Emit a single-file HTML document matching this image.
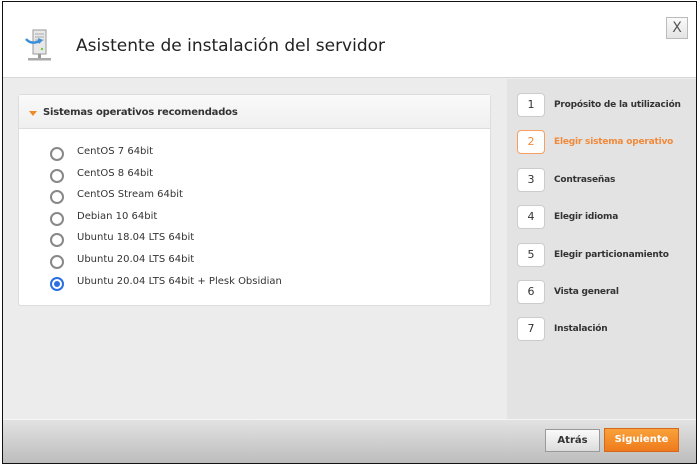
<!DOCTYPE html>
<html><head><meta charset="utf-8"><style>
*{margin:0;padding:0;box-sizing:border-box}
body{width:700px;height:466px;background:#fff;font-family:"DejaVu Sans","Liberation Sans",sans-serif;position:relative;overflow:hidden}
.frame{position:absolute;left:2px;top:1px;width:695px;height:463px;border:1.5px solid #111;background:#ececec;overflow:hidden}
.hdr{position:absolute;left:0;top:0;right:0;height:76px;background:#fff;border-bottom:1px solid #d8d8d8}
.title{position:absolute;left:73px;top:34px;font-size:17px;color:#222}
.x{position:absolute;left:663px;top:15px;width:22px;height:22px;border:1px solid #bbb;background:linear-gradient(#fafafa,#e4e4e4);font-size:14px;color:#555;text-align:center;line-height:20px}
.side{position:absolute;left:504px;top:77px;width:190px;height:340px;background:#e3e3e3}
.step{position:absolute;left:10px;width:28px;height:24px;border:1px solid #ccc;border-radius:4px;background:#fff;font-size:11px;text-align:center;line-height:22px;color:#333}
.sl{position:absolute;left:47px;font-size:9px;font-weight:bold;color:#333;letter-spacing:-0.2px;white-space:nowrap}
.panel{position:absolute;left:15px;top:92px;width:473px;height:212px;background:#fff;border:1px solid #ddd;border-radius:3px}
.ph{height:34px;background:linear-gradient(#fafafa,#efefef);border-bottom:1px solid #ddd;font-size:10px;font-weight:bold;color:#333;padding:12px 0 0 24px;position:relative;letter-spacing:-0.2px}
.ph:before{content:"";position:absolute;left:10px;top:16px;border:4px solid transparent;border-top:5px solid #f08a24;border-bottom:0}
.r{position:absolute;left:31px;width:14px;height:14px;border:2px solid #888;border-radius:50%;background:#fff}
.r.on{border-color:#2b6fe0}
.r.on:after{content:"";position:absolute;left:2px;top:2px;width:6px;height:6px;border-radius:50%;background:#2b6fe0}
.rt{position:absolute;left:58px;font-size:10px;color:#333}
.foot{position:absolute;left:0;top:417px;right:0;bottom:0;background:linear-gradient(#e2e2e2,#bdbdbd);border-top:1px solid #f4f4f4}
.b1{position:absolute;left:542px;top:427px;width:55px;height:23px;border:1px solid #999;background:linear-gradient(#fafafa,#dcdcdc);font-size:10px;font-weight:bold;color:#333;text-align:center;line-height:21px}
.b2{position:absolute;left:601px;top:426px;width:75px;height:24px;border:1px solid #d2691e;background:linear-gradient(#f9a23a,#ee7a1c);font-size:10px;font-weight:bold;color:#fff;text-align:center;line-height:22px}
</style></head><body>
<div class="frame">
<div class="hdr">
<svg style="position:absolute;left:22px;top:26px" width="30" height="36" viewBox="0 0 30 36">
<rect x="8" y="2" width="13" height="24" fill="#e8e8e8" stroke="#999"/>
<line x1="10" y1="6" x2="19" y2="6" stroke="#aaa"/><line x1="10" y1="9" x2="19" y2="9" stroke="#aaa"/><line x1="10" y1="12" x2="19" y2="12" stroke="#aaa"/>
<circle cx="17" cy="21" r="1.2" fill="#7c3"/>
<path d="M1 11 Q6 17 15 13" stroke="#3a8fd8" stroke-width="2.5" fill="none"/>
<path d="M13 10 L18 12 L14 16Z" fill="#3a8fd8"/>
<rect x="13" y="26" width="3" height="4" fill="#999"/>
<rect x="3" y="30" width="23" height="2.5" fill="#aaa"/>
</svg>
<div class="title">Asistente de instalación del servidor</div>
<div class="x">X</div>
</div>
<div class="panel">
<div class="ph">Sistemas operativos recomendados</div>
<div class="r" style="top:52px"></div><div class="rt" style="top:51px">CentOS 7 64bit</div>
<div class="r" style="top:74px"></div><div class="rt" style="top:73px">CentOS 8 64bit</div>
<div class="r" style="top:95px"></div><div class="rt" style="top:94px">CentOS Stream 64bit</div>
<div class="r" style="top:117px"></div><div class="rt" style="top:116px">Debian 10 64bit</div>
<div class="r" style="top:138px"></div><div class="rt" style="top:137px">Ubuntu 18.04 LTS 64bit</div>
<div class="r" style="top:160px"></div><div class="rt" style="top:159px">Ubuntu 20.04 LTS 64bit</div>
<div class="r on" style="top:182px"></div><div class="rt" style="top:181px">Ubuntu 20.04 LTS 64bit + Plesk Obsidian</div>
</div>
<div class="side">
<div class="step" style="top:14px">1</div><div class="sl" style="top:21px">Propósito de la utilización</div>
<div class="step" style="top:51px;border-color:#f5a060;color:#f08a3a">2</div><div class="sl" style="top:58px;color:#f08a3a">Elegir sistema operativo</div>
<div class="step" style="top:89px">3</div><div class="sl" style="top:96px">Contraseñas</div>
<div class="step" style="top:126px">4</div><div class="sl" style="top:133px">Elegir idioma</div>
<div class="step" style="top:164px">5</div><div class="sl" style="top:171px">Elegir particionamiento</div>
<div class="step" style="top:201px">6</div><div class="sl" style="top:208px">Vista general</div>
<div class="step" style="top:238px">7</div><div class="sl" style="top:245px">Instalación</div>
</div>
<div class="foot"></div>
<div class="b1">Atrás</div>
<div class="b2">Siguiente</div>
</div>
</body></html>
